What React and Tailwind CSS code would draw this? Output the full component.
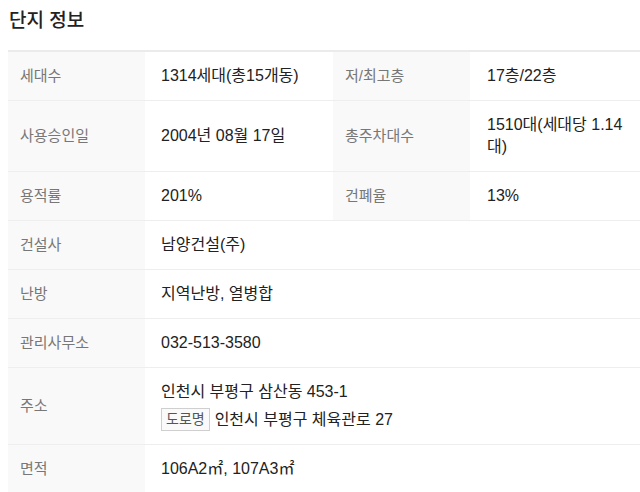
import React from 'react';

const rows = [
  { label: '세대수', value: '1314세대(총15개동)', label2: '저/최고층', value2: '17층/22층' },
  {
    label: '사용승인일',
    value: '2004년 08월 17일',
    label2: '총주차대수',
    value2: (
      <>
        1510대(세대당 1.14
        <br />
        대)
      </>
    ),
  },
  { label: '용적률', value: '201%', label2: '건폐율', value2: '13%' },
  { label: '건설사', value: '남양건설(주)' },
  { label: '난방', value: '지역난방, 열병합' },
  { label: '관리사무소', value: '032-513-3580' },
  {
    label: '주소',
    value: (
      <>
        <div>인천시 부평구 삼산동 453-1</div>
        <div className="mt-[5px] flex items-center">
          <span className="mr-[5px] inline-block border border-[#cfcfcf] bg-[#fafafa] px-[4px] text-[14px] leading-[21px] text-[#555]">
            도로명
          </span>
          인천시 부평구 체육관로 27
        </div>
      </>
    ),
  },
  { label: '면적', value: '106A2㎡, 107A3㎡' },
];

const ComplexInfo = () => {
  return (
    <div
      className="w-[640px] h-[492px] overflow-hidden bg-white"
      style={{ fontFamily: '"Liberation Sans", "Noto Sans CJK KR", sans-serif' }}
    >
      <h2 className="px-[9px] pt-[6px] pb-[14px] text-[19px] leading-[30px] font-medium text-[#222]">
        단지 정보
      </h2>
      <div className="pl-[8px]">
        <table className="w-[640px] border-collapse border-t-2 border-[#ebebeb] leading-[22px]">
          <colgroup>
            <col className="w-[137px]" />
            <col className="w-[188px]" />
            <col className="w-[137px]" />
            <col />
          </colgroup>
          <tbody>
            {rows.map((row) => (
              <tr key={row.label} className="border-b border-[#eeeeee]">
                <th className="bg-[#f9f9f9] py-[13px] pl-[12px] text-left text-[15px] font-normal text-[#777]">
                  {row.label}
                </th>
                {row.label2 ? (
                  <>
                    <td className="py-[13px] pl-[16px] text-[16px] text-[#222] whitespace-nowrap">{row.value}</td>
                    <th className="bg-[#f9f9f9] py-[13px] pl-[12px] text-left text-[15px] font-normal text-[#777]">
                      {row.label2}
                    </th>
                    <td className="py-[13px] pl-[17px] text-[16px] text-[#222] whitespace-nowrap">{row.value2}</td>
                  </>
                ) : (
                  <td colSpan={3} className="py-[13px] pl-[16px] text-[16px] text-[#222]">
                    {row.value}
                  </td>
                )}
              </tr>
            ))}
          </tbody>
        </table>
      </div>
    </div>
  );
};

export default function App() {
  return <ComplexInfo />;
}
